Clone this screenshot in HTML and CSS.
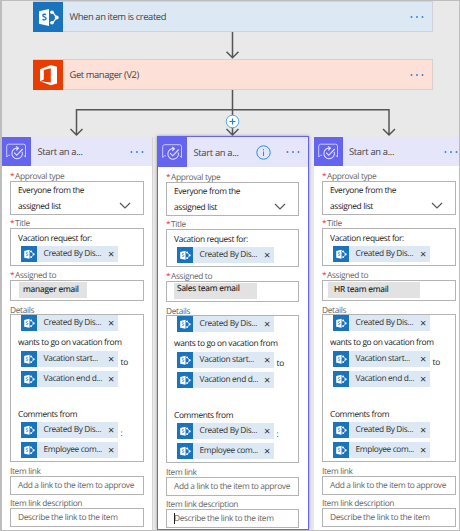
FILE: index.html
```html
<!DOCTYPE html>
<html lang="en">
<head>
<meta charset="utf-8">
<title>Vacation approval flow</title>
<link rel="stylesheet" href="styles.css">
</head>
<body>
<svg class="defs" width="0" height="0" aria-hidden="true">
  <symbol id="sharepoint" viewBox="0 0 30 30">
    <path d="M6 9.2 16 7v17L6 21.8z" fill="#fff"/>
    <path d="M13 12.6c-.7-.5-3.2-.7-3.2.9 0 1.700 3.300 1.200 3.300 3 0 1.700-2.600 1.500-3.600.9" fill="none" stroke="#1a73bd" stroke-width="1.300"/>
    <path d="M17.500 10.200h2.200l4 5.400-4 5.200h-2.200" fill="none" stroke="#fff" stroke-width="1.300"/>
    <circle cx="19" cy="10.300" r="1.800" fill="#fff"/><circle cx="23.700" cy="15.600" r="2" fill="#fff"/><circle cx="19" cy="20.800" r="1.800" fill="#fff"/>
  </symbol>
  <symbol id="approval" viewBox="0 0 29 29">
    <path d="M8 18.300H6.500L4.700 20V9.200Q4.700 7.200 6.700 7.200H21.500q2 0 2 2V20l-1.800-1.700" fill="none" stroke="#c9caff" stroke-width="1"/>
    <path d="M16.200 11.200a5.300 5.300 0 1 0 4 3.600" fill="none" stroke="#dcdcff" stroke-width="1.100"/>
    <path d="m12.200 15.700 2.500 2.600 6-6.300M14.200 9.300l2.200 1.900-2 2.200" fill="none" stroke="#e8e8ff" stroke-width="1.100"/>
  </symbol>
  <symbol id="dots" viewBox="0 0 14 4">
    <circle cx="1.500" cy="2" r=".95"/><circle cx="7" cy="2" r=".95"/><circle cx="12.500" cy="2" r=".95"/>
  </symbol>
  <symbol id="chevron" viewBox="0 0 12 7"><path d="m1 1 5 5 5-5" fill="none" stroke="#555" stroke-width="1.200"/></symbol>
</svg>

<main class="canvas">
  <section class="step step-blue">
    <svg class="step-icon"><use href="#sharepoint"/></svg>
    <span class="step-name">When an item is created</span>
    <svg class="dots"><use href="#dots"/></svg>
  </section>
  <svg class="link" viewBox="0 0 457 27"><path d="M230.500 0v26M224.500 19.700l6 6 6-6"/></svg>
  <section class="step step-red">
    <svg class="step-icon" viewBox="0 0 30 30"><path fill="#fff" fill-rule="evenodd" d="M7 9.200 17.800 5 24 6.800v16.600L17.800 25.200 7 21.200l10.800 1.300V8.200l-7 1.700v9.700L7 21.200z"/></svg>
    <span class="step-name">Get manager (V2)</span>
    <svg class="dots"><use href="#dots"/></svg>
  </section>
  <svg class="fork" viewBox="0 0 457 46">
    <path d="M230.500 0v45M224.500 39l6 6 6-6M74.500 45V19.800H387V45M68.500 39l6 6 6-6M381 39l6 6 6-6"/>
    <circle cx="230.500" cy="31.500" r="6.300"/><path class="plus" d="M227.500 31.500h6M230.500 28.500v6"/>
  </svg>

  <div class="branches">
    <article class="branch manager">
      <header><svg class="app"><use href="#approval"/></svg><h2>Start an a...</h2><svg class="dots"><use href="#dots"/></svg></header>
      <div class="fields">
        <label><i>*</i>Approval type</label>
        <div class="box choice"><p>Everyone from the<br>assigned list</p><svg class="chevron"><use href="#chevron"/></svg></div>
        <label><i>*</i>Title</label>
        <div class="box title"><p>Vacation request for:</p><div class="token"><svg><use href="#sharepoint"/></svg><span>Created By Dis...</span><b>×</b></div></div>
        <label><i>*</i>Assigned to</label>
        <div class="box assignee"><span class="person">manager email</span></div>
        <label>Details</label>
        <div class="box details">
          <div class="token"><svg><use href="#sharepoint"/></svg><span>Created By Dis...</span><b>×</b></div>
          <p class="wants">wants to go on vacation from</p>
          <div class="row"><div class="token"><svg><use href="#sharepoint"/></svg><span>Vacation start...</span><b>×</b></div><em>to</em></div>
          <div class="row"><div class="token"><svg><use href="#sharepoint"/></svg><span>Vacation end d...</span><b>×</b></div></div>
          <p class="comments">Comments from</p>
          <div class="row"><div class="token"><svg><use href="#sharepoint"/></svg><span>Created By Dis...</span><b>×</b></div><em>:</em></div>
          <div class="row"><div class="token"><svg><use href="#sharepoint"/></svg><span>Employee com...</span><b>×</b></div></div>
        </div>
        <label>Item link</label>
        <div class="box entry">Add a link to the item to approve</div>
        <label>Item link description</label>
        <div class="box entry">Describe the link to the item</div>
      </div>
    </article>

    <article class="branch sales">
      <header><svg class="app"><use href="#approval"/></svg><h2>Start an a...</h2><svg class="info" viewBox="0 0 15 15"><circle cx="7.500" cy="7.500" r="6.700"/><path d="M7.500 6.500v4.500M7.500 4v1.300"/></svg><svg class="dots"><use href="#dots"/></svg></header>
      <div class="fields">
        <label><i>*</i>Approval type</label>
        <div class="box choice"><p>Everyone from the<br>assigned list</p><svg class="chevron"><use href="#chevron"/></svg></div>
        <label><i>*</i>Title</label>
        <div class="box title"><p>Vacation request for:</p><div class="token"><svg><use href="#sharepoint"/></svg><span>Created By Dis...</span><b>×</b></div></div>
        <label><i>*</i>Assigned to</label>
        <div class="box assignee"><span class="person">Sales team email</span></div>
        <label>Details</label>
        <div class="box details">
          <div class="token"><svg><use href="#sharepoint"/></svg><span>Created By Dis...</span><b>×</b></div>
          <p class="wants">wants to go on vacation from</p>
          <div class="row"><div class="token"><svg><use href="#sharepoint"/></svg><span>Vacation start...</span><b>×</b></div><em>to</em></div>
          <div class="row"><div class="token"><svg><use href="#sharepoint"/></svg><span>Vacation end d...</span><b>×</b></div></div>
          <p class="comments">Comments from</p>
          <div class="row"><div class="token"><svg><use href="#sharepoint"/></svg><span>Created By Dis...</span><b>×</b></div><em>:</em></div>
          <div class="row"><div class="token"><svg><use href="#sharepoint"/></svg><span>Employee com...</span><b>×</b></div></div>
        </div>
        <label>Item link</label>
        <div class="box entry">Add a link to the item to approve</div>
        <label>Item link description</label>
        <div class="box entry focused">Describe the link to the item</div>
      </div>
    </article>

    <article class="branch hr">
      <header><svg class="app"><use href="#approval"/></svg><h2>Start an a...</h2><svg class="dots"><use href="#dots"/></svg></header>
      <div class="fields">
        <label><i>*</i>Approval type</label>
        <div class="box choice"><p>Everyone from the<br>assigned list</p><svg class="chevron"><use href="#chevron"/></svg></div>
        <label><i>*</i>Title</label>
        <div class="box title"><p>Vacation request for:</p><div class="token"><svg><use href="#sharepoint"/></svg><span>Created By Dis...</span><b>×</b></div></div>
        <label><i>*</i>Assigned to</label>
        <div class="box assignee"><span class="person">HR team email</span></div>
        <label>Details</label>
        <div class="box details">
          <div class="token"><svg><use href="#sharepoint"/></svg><span>Created By Dis...</span><b>×</b></div>
          <p class="wants">wants to go on vacation from</p>
          <div class="row"><div class="token"><svg><use href="#sharepoint"/></svg><span>Vacation start...</span><b>×</b></div><em>to</em></div>
          <div class="row"><div class="token"><svg><use href="#sharepoint"/></svg><span>Vacation end d...</span><b>×</b></div></div>
          <p class="comments">Comments from</p>
          <div class="row"><div class="token"><svg><use href="#sharepoint"/></svg><span>Created By Dis...</span><b>×</b></div></div>
          <div class="row"><div class="token"><svg><use href="#sharepoint"/></svg><span>Employee com...</span><b>×</b></div></div>
        </div>
        <label>Item link</label>
        <div class="box entry">Add a link to the item to approve</div>
        <label>Item link description</label>
        <div class="box entry">Describe the link to the item</div>
      </div>
    </article>
  </div>
</main>
</body>
</html>
```
FILE: styles.css
```css
* { box-sizing: border-box; }
body { margin: 0; overflow: hidden; font-family: "Open Sans", sans-serif; font-size: 8.400px; letter-spacing: -0.36px; text-rendering: geometricPrecision; color: #333; }
.defs { display: block; }
p, h2 { margin: 0; font-weight: 400; }
svg { display: block; flex: none; }
.canvas { width: 460px; height: 531px; overflow: hidden; background: #e9e9e9; border: 1px solid #bdbdbd; border-left-width: 2px; }

.step { display: flex; align-items: center; width: 400px; height: 31px; margin-left: 31px; border: 1px solid #cfd3d8; border-left: 0; padding-right: 8px; }
.step-blue { background: #dce9f5; --brand: #1a73bd; }
.step-red { background: #fde1d8; border-color: #dacfcb; --brand: #eb3c00; }
.step-icon { width: 30px; height: 30px; background: var(--brand); }
.step-name { margin-left: 6.500px; flex: 1; font-size: 9.400px; letter-spacing: -0.4px; color: #444; }
.dots { width: 14px; height: 4px; fill: #2f7de1; }
.link, .fork { width: 457px; height: 27px; fill: none; stroke: #555; stroke-width: 1.500; overflow: visible; position: relative; }
.fork { height: 46px; }
.fork circle { fill: #fff; stroke: #58a6e6; stroke-width: 1; }
.fork .plus { stroke: #1683dc; stroke-width: 1.200; }

.branches { display: flex; align-items: flex-start; height: 394px; }
.branch { height: 394px; background: #fff; flex: none; }
.manager { width: 151px; margin-top: 1px; border-right: 1px solid #d4d4d4; }
.sales { width: 152px; margin-left: 4px; border: solid #6464f0; border-width: 1.500px; box-shadow: 0 0 3px #999; }
.hr { width: 146px; margin: 1px 0 0 4.500px; border-right: 1px solid #ccc; }
header { display: flex; align-items: center; height: 29px; background: #e6e6fb; padding-right: 8px; }
.sales header { height: 30px; padding-right: 8px; }
.hr header { padding-right: 1px; }
.app { width: 29px; height: 29px; background: #6464f0; }
.sales .app { height: 30px; }
h2 { font-size: 9.400px; letter-spacing: -0.32px; margin-left: 6.500px; color: #444; flex: 1; }
.info { width: 15px; height: 15px; fill: none; stroke: #2f8bdd; stroke-width: 1; margin-right: 15px; }
.fields { width: 134px; margin-left: 8px; padding-top: 5px; }
.sales .fields { width: 132.500px; margin-left: 8px; }
.hr .fields { width: 133.500px; margin-left: 8.500px; }
label { display: block; height: 10px; line-height: 11px; color: #666; white-space: nowrap; }
label i { display: inline-block; width: 5px; color: #e33; font-style: normal; }
.box { border: 1px solid #b3b3b3; background: #fff; padding-left: 7px; color: #222; white-space: nowrap; margin-bottom: 4px; }
.choice { height: 34px; margin-bottom: 3px; display: flex; justify-content: space-between; align-items: center; padding-right: 12px; line-height: 16px; }
.choice p { margin-top: 1px; }
.chevron { width: 12px; height: 7px; margin-top: 15px; }
.title { height: 38px; padding-top: 3px; line-height: 13px; }
.title .token { margin-top: 1px; }
.assignee { height: 21px; padding: 1px 0 0 8px; }
.person { display: block; width: 68px; height: 16px; line-height: 16px; background: #e2e2e2; padding-left: 4px; letter-spacing: -0.2px; color: #222; -webkit-text-stroke: .15px #222; }
.sales .assignee { padding-left: 7px; }
.sales .person { width: 83px; line-height: 12px; padding-left: 3px; }
.hr .assignee { padding-left: 5px; }
.hr .person { width: 92px; line-height: 15px; padding-left: 6px; }
.details { height: 148px; margin-top: -1px; }
.token { display: flex; align-items: center; width: 97px; height: 16px; margin-left: 3px; background: #dce9f5; line-height: 16px; color: #333; }
.token svg { width: 16px; height: 16px; background: #1a73bd; }
.token span { flex: 1; margin-left: 6.500px; }
.token b { width: 10px; font-weight: 400; font-size: 11px; letter-spacing: 0; margin-top: 1px; }
.row { display: flex; height: 20px; }
.row em { font-style: normal; margin-left: 2.500px; line-height: 24px; }
.wants { height: 20px; line-height: 24px; }
.comments { height: 31px; line-height: 47px; }
.entry { height: 19px; line-height: 17px; color: #666; margin-bottom: 3px; }
.focused { position: relative; }
.focused::before { content: ""; position: absolute; left: 6.500px; top: 3px; width: 1px; height: 11px; background: #222; }
```
